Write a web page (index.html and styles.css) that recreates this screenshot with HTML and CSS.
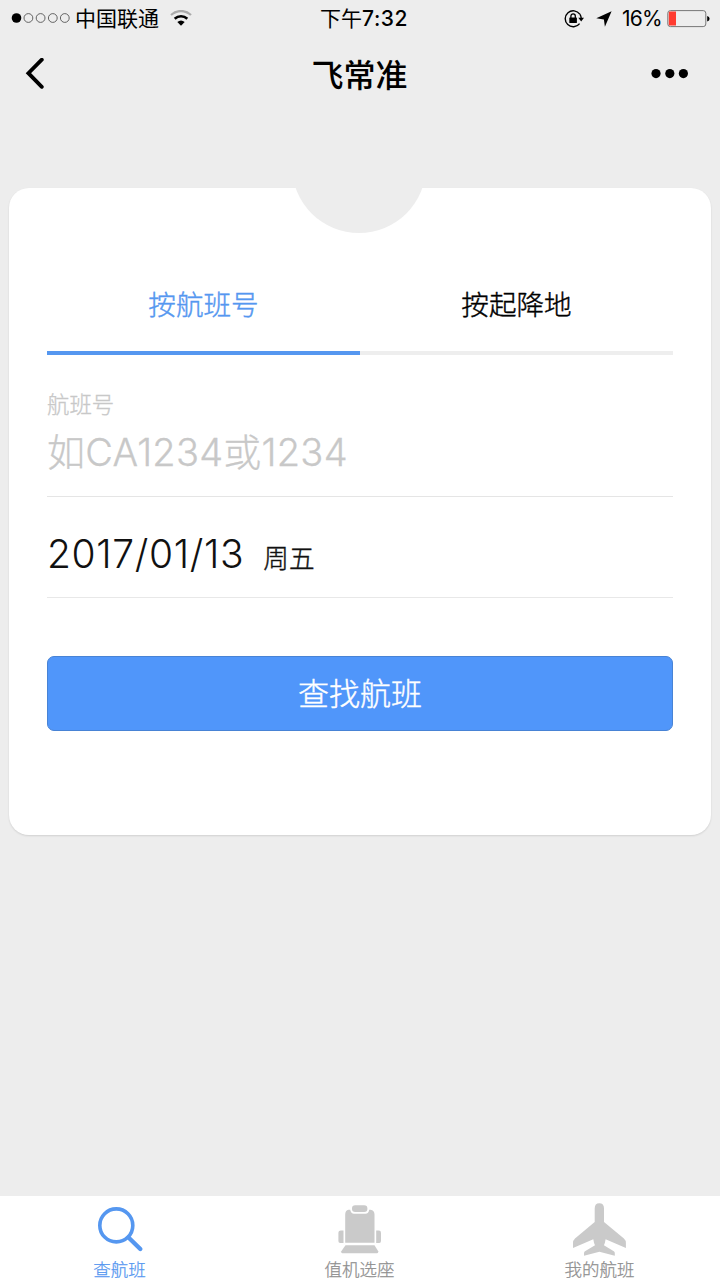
FILE: index.html
```html
<!DOCTYPE html>
<html lang="zh-CN">
<head>
<meta charset="utf-8">
<title>飞常准</title>
<link rel="stylesheet" href="styles.css">
</head>
<body>
<div class="screen">
  <header class="status">
    <div class="status-left">
      <svg class="signal" width="60" height="12" viewBox="0 0 60 12">
        <circle cx="5.5" cy="5" r="4.8"/>
        <g fill="none" stroke="#555" stroke-width="0.9"><circle cx="17.4" cy="5" r="4.4"/><circle cx="29.6" cy="5" r="4.4"/><circle cx="41.8" cy="5" r="4.4"/><circle cx="53.8" cy="5" r="4.4"/></g>
      </svg>
      <span class="carrier">中国联通</span>
      <svg class="wifi" width="22" height="17" viewBox="0 0 22 17" fill="none">
        <path d="M1 5C7-.3 15-.3 21 5" stroke="#aaa" stroke-width="2.3"/>
        <path d="M4.7 8.8C8.3 5.4 13.7 5.4 17.3 8.8" stroke="#000" stroke-width="2.6"/>
        <path d="M7.3 11.9Q11 8.9 14.7 11.9L11 15.7Z" fill="#000"/>
      </svg>
    </div>
    <div class="clock">下午<b>7:32</b></div>
    <div class="status-right">
      <svg class="lock" width="20" height="18" viewBox="0 0 20 18" fill="none" stroke="#000">
        <path d="M15.8 4.2A8 8 0 1 0 15.6 13.6" stroke-width="1.4"/>
        <path d="M15.8 4.2Q17 5.8 17.2 8" stroke-width="1.4"/>
        <path d="M14.3 7.8H20L17.2 11.4Z" fill="#000" stroke="none"/>
        <path d="M6.9 8V6a2.2 2.2 0 0 1 4.4 0V8" stroke-width="1.3"/>
        <rect x="5.3" y="7.4" width="7.6" height="5.6" rx=".6" fill="#000" stroke="none"/>
      </svg>
      <svg class="arrow" width="16" height="16" viewBox="0 0 16 16"><path d="M15.6.2 8.9 15.8 7.9 8.4.3 7.2Z"/></svg>
      <span class="percent">16%</span>
      <svg class="battery" width="43" height="18" viewBox="0 0 43 18">
        <rect x=".8" y=".6" width="38" height="16" rx="2.6" fill="none" stroke="#777"/>
        <path d="M3 1.6H9V15.6H3Q1.8 15.6 1.8 14.4V2.8Q1.8 1.6 3 1.6Z" fill="#ff3b30"/>
        <path d="M40.2 6Q42.6 6.5 42.6 8.8T40.2 11.6Z"/>
      </svg>
    </div>
  </header>

  <nav class="navbar">
    <svg class="back" width="20" height="32" viewBox="0 0 20 32" fill="none" stroke="#000" stroke-width="3.8" stroke-linecap="round" stroke-linejoin="miter"><path d="M16.8 1.7 3.4 15.2 16.8 28.8"/></svg>
    <h1 class="title">飞常准</h1>
    <svg class="more" width="38" height="10" viewBox="0 0 38 10"><circle cx="5" cy="4.6" r="4.6"/><circle cx="18.8" cy="4.6" r="4.6"/><circle cx="32.4" cy="4.6" r="4.6"/></svg>
  </nav>

  <main class="card">
    <div class="tabs">
      <div class="tab active">按航班号</div>
      <div class="tab">按起降地</div>
    </div>
    <div class="field">
      <div class="label">航班号</div>
      <div class="placeholder">如<span class="code">CA1234</span>或<span class="code">1234</span></div>
    </div>
    <div class="date-row">
      <span class="date">2017/01/13</span>
      <span class="weekday">周五</span>
    </div>
    <button class="search">查找航班</button>
  </main>

  <footer class="tabbar">
    <div class="item selected">
      <svg width="56" height="56" viewBox="0 0 56 56" fill="none" stroke="#5597f0" stroke-width="3.6"><circle cx="24.3" cy="25.4" r="16.5"/><path d="M36.5 37.5 48.3 49" stroke-width="4.4" stroke-linecap="round"/></svg>
      <span>查航班</span>
    </div>
    <div class="item">
      <svg width="56" height="56" viewBox="0 0 56 56" fill="#cacaca">
        <rect x="20" y="5.2" width="15.4" height="6.8" rx="3.2"/>
        <path d="M16.5 9.7H18.2Q19 13.8 22 13.8H33.5Q36.6 13.8 37.2 9.7H38.5Q42.5 10.2 42.5 14.5V42.8H13.2V14.5Q13.2 10.5 16.5 9.7Z"/>
        <path d="M11.5 30.4V43H8.2Q6.4 43 6.4 41V32.8Q6.4 30.4 8.8 30.4Z"/>
        <path d="M44.2 30.4V43H47.3Q49 43 49 41V32.8Q49 30.4 46.8 30.4Z"/>
        <path d="M13.5 45.2H42.5L46.2 51.2Q46.6 53.3 45 53.3H10.4Q8.8 53.3 9.3 51.2Z"/>
      </svg>
      <span>值机选座</span>
    </div>
    <div class="item">
      <svg width="56" height="56" viewBox="0 0 56 56" fill="#cacaca"><path d="M27.3 3.3Q32 3.3 32 8.5V22L51.9 38.5Q53.9 40.3 53.9 43V48L33.6 39.3Q33.1 43 31.9 45.3L41.8 51.3Q42.8 52 42.8 53.3V55.7L27.4 51.8 12 55.7V53.3Q12 52 13 51.3L23 45.3Q21.8 43 21.3 39.3L1 48V43Q1 40.3 3 38.5L22.7 22V8.5Q22.7 3.3 27.3 3.3Z"/></svg>
      <span>我的航班</span>
    </div>
  </footer>
</div>
</body>
</html>
```
FILE: styles.css
```css
* { box-sizing: border-box; }
body { margin: 0; font-family: Inter, "Noto Sans CJK SC", sans-serif; color: #000; }
svg { display: block; flex: none; }
.screen { width: 720px; height: 1280px; background: #ededed; display: flex; flex-direction: column; overflow: hidden; }

.status { height: 37px; display: grid; grid-template-columns: 1fr auto 1fr; align-items: center; padding: 0 10px 0 11px; font-size: 21px; line-height: 36px; white-space: nowrap; }
.status-left, .status-right { display: flex; align-items: center; }
.status-right { justify-content: flex-end; }
.carrier { margin-left: 4px; }
.wifi { margin-left: 11px; }
.clock { margin-left: 7px; }
.clock b { font-weight: 500; letter-spacing: 0.5px; }
.lock { margin-right: 1px; }
.arrow { margin-left: 11px; }
.percent { margin-left: 10px; letter-spacing: -0.7px; }
.battery { margin-left: 5px; }

.navbar { height: 73px; display: flex; align-items: center; justify-content: space-between; padding: 0 31px 0 25px; }
.title { margin: 4px 0 0 23px; font-size: 32px; line-height: 48px; font-weight: 500; }

.card { position: relative; margin: 78px 9px 0; height: 647px; padding: 87px 38px 0; background: #fff; border-radius: 20px; box-shadow: 0 1px 2px rgba(0, 0, 0, .12); }
.card::before { content: ""; position: absolute; left: 283px; top: -89px; width: 134px; height: 134px; border-radius: 50%; background: #ededed; clip-path: inset(86px 0 0 0); }
.tabs { display: flex; }
.tab { flex: 1; height: 80px; border-bottom: 4px solid #eee; text-align: center; font-size: 27.6px; font-weight: 300; -webkit-text-stroke: 0.4px; line-height: 60px; }
.active { color: #5597f0; border-color: #5597f0; }
.field { height: 142px; padding-top: 35px; border-bottom: 1px solid #e5e5e5; color: #c8c8c8; font-weight: 300; -webkit-text-stroke: 0.3px; }
.label { font-size: 22.4px; line-height: 30px; }
.placeholder { margin-top: 8px; font-size: 38px; line-height: 48px; letter-spacing: 0.25px; white-space: nowrap; }
.date-row { height: 101px; padding-top: 31px; border-bottom: 1px solid #e8e8e8; display: flex; align-items: baseline; line-height: 52px; color: #111; }
.date { font-size: 39px; font-weight: 350; letter-spacing: 0.65px; }
.weekday { margin-left: 19px; font-size: 25.6px; font-weight: 300; -webkit-text-stroke: 0.4px; }
.search { display: block; width: 100%; height: 75px; margin-top: 58px; padding: 0; border: 1px solid #4883d5; border-radius: 7px; background: #5096fa; color: #fff; font: 300 31px/74px Inter, "Noto Sans CJK SC", sans-serif; -webkit-text-stroke: 0.4px; }

.tabbar { margin-top: auto; height: 84px; background: #fff; display: flex; }
.item { flex: 1; display: flex; flex-direction: column; align-items: center; padding-top: 4px; font-size: 17.5px; font-weight: 300; -webkit-text-stroke: 0.25px; line-height: 24px; color: #8e8e8e; }
.item svg { margin-bottom: 2px; }
.item span { margin-right: 1px; }
.item.selected { color: #5597f0; }
```
